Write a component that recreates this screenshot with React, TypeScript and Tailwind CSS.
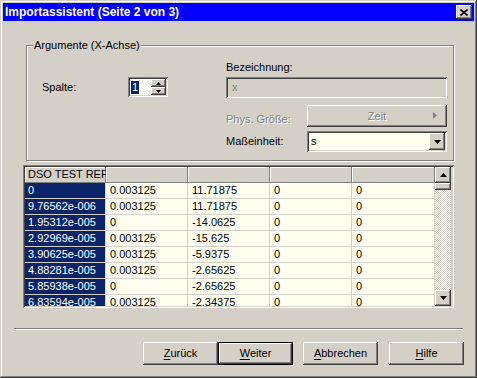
const raised =
  'shadow-[inset_-1px_-1px_#404040,inset_1px_1px_#ffffff,inset_-2px_-2px_#808080,inset_2px_2px_#d4d0c8]'
const sunken =
  'shadow-[inset_1px_1px_#808080,inset_-1px_-1px_#ffffff,inset_2px_2px_#404040,inset_-2px_-2px_#d4d0c8]'

const rows = [
  ['0', '0.003125', '11.71875', '0', '0'],
  ['9.76562e-006', '0.003125', '11.71875', '0', '0'],
  ['1.95312e-005', '0', '-14.0625', '0', '0'],
  ['2.92969e-005', '0.003125', '-15.625', '0', '0'],
  ['3.90625e-005', '0.003125', '-5.9375', '0', '0'],
  ['4.88281e-005', '0.003125', '-2.65625', '0', '0'],
  ['5.85938e-005', '0', '-2.65625', '0', '0'],
  ['6.83594e-005', '0.003125', '-2.34375', '0', '0'],
]

const colWidths = ['w-[81px]', 'w-[82px]', 'w-[82px]', 'w-[82px]', 'w-[83px]']

const Tri = ({ dir, color = '#000', size = 'w-[7px] h-[4px]' }: { dir: 'up' | 'down' | 'right'; color?: string; size?: string }) => {
  const pts = dir === 'up' ? '0,4 7,4 3.5,0' : dir === 'down' ? '0,0 7,0 3.5,4' : '0,0 0,7 4,3.5'
  const vb = dir === 'right' ? '0 0 4 7' : '0 0 7 4'
  return (
    <svg viewBox={vb} className={size}>
      <polygon points={pts} fill={color} />
    </svg>
  )
}

const Button = ({ label, mnemonic, def }: { label: string; mnemonic: string; def?: boolean }) => {
  const rest = label.slice(1)
  return (
    <div className={`w-[75px] h-[23px] ${def ? 'border border-black' : ''}`}>
      <div className={`w-full h-full ${raised} flex items-center justify-center`}>
        <span>
          <span className="underline underline-offset-2">{mnemonic}</span>
          {rest}
        </span>
      </div>
    </div>
  )
}

const DataTable = () => (
  <div className={`ml-[20px] mt-[4px] w-[431px] h-[143px] p-[2px] ${sunken} bg-[#d4d0c8]`}>
    <div className="flex h-full overflow-hidden">
      <div className="flex flex-col">
        <div className="flex h-[16px]">
          {colWidths.map((w, i) => (
            <div
              key={i}
              className={`${w} h-[16px] shrink-0 bg-[#d4d0c8] shadow-[inset_-1px_-1px_#808080,inset_1px_1px_#ffffff] pl-[3px] leading-[15px] whitespace-nowrap overflow-hidden`}
            >
              {i === 0 ? 'DSO TEST REF' : ''}
            </div>
          ))}
        </div>
        {rows.map((r, ri) => (
          <div key={ri} className="flex h-[16px] shrink-0">
            {r.map((c, ci) => (
              <div
                key={ci}
                className={`${colWidths[ci]} h-[16px] shrink-0 border-r border-b border-[#d4d0c8] leading-[15px] whitespace-nowrap overflow-hidden ${
                  ci === 0 ? 'bg-[#0a246a] text-white pl-[3px]' : 'bg-[#fffff0] pl-[4px]'
                }`}
              >
                {c}
              </div>
            ))}
          </div>
        ))}
      </div>
      <div className="w-[17px] h-full flex flex-col shrink-0">
        <div className={`h-[16px] w-[16px] ${raised} bg-[#d4d0c8] flex items-center justify-center`}>
          <Tri dir="up" />
        </div>
        <div className={`h-[7px] w-[16px] ${raised} bg-[#d4d0c8]`} />
        <div className="flex-1 w-[16px] bg-[repeating-conic-gradient(#d4d0c8_0_25%,#ffffff_0_50%)] bg-[length:2px_2px]" />
        <div className={`h-[16px] w-[16px] ${raised} bg-[#d4d0c8] flex items-center justify-center`}>
          <Tri dir="down" />
        </div>
      </div>
    </div>
  </div>
)

export default function App() {
  return (
    <div className="w-[477px] h-[378px] bg-[#d4d0c8] p-[3px] flex flex-col text-[11px] text-black font-['Liberation_Sans',Arial,sans-serif] shadow-[inset_-1px_-1px_#404040,inset_1px_1px_#d4d0c8,inset_-2px_-2px_#808080,inset_2px_2px_#ffffff]">
      <div className="h-[18px] bg-[#0000ff] flex items-center justify-between pl-[2px] pr-[2px] shrink-0">
        <span className="text-white font-bold text-[12px] leading-[18px]">Importassistent (Seite 2 von 3)</span>
        <div className={`w-[16px] h-[14px] bg-[#d4d0c8] ${raised} flex items-center justify-center`}>
          <svg viewBox="0 0 8 7" className="w-[8px] h-[7px]">
            <path d="M0.5 0.5 L7.5 6.5 M7.5 0.5 L0.5 6.5" stroke="#000" strokeWidth="1.6" />
          </svg>
        </div>
      </div>

      <div className="flex flex-col items-start">
        <div className="relative ml-[23px] mt-[24px] w-[428px] h-[116px] border border-[#808080] shadow-[inset_1px_1px_#ffffff,1px_1px_#ffffff]">
          <span className="absolute -top-[8px] left-[6px] bg-[#d4d0c8] px-[1px] leading-[14px]">Argumente (X-Achse)</span>
          <div className="flex items-start pl-[15px] pt-[15px]">
            <div className="w-[184px] h-[20px] mt-[16px] flex items-center">
              <span className="w-[86px]">Spalte:</span>
              <div className={`w-[40px] h-[20px] bg-white ${sunken} p-[2px] flex`}>
                <div className="flex-1 flex items-center pl-[1px]">
                  <span className="bg-[#0a246a] text-white leading-[13px] px-[1px]">1</span>
                </div>
                <div className="w-[15px] flex flex-col">
                  <div className={`h-[8px] ${raised} bg-[#d4d0c8] flex items-center justify-center`}>
                    <Tri dir="up" size="w-[5px] h-[3px]" />
                  </div>
                  <div className={`h-[8px] ${raised} bg-[#d4d0c8] flex items-center justify-center`}>
                    <Tri dir="down" size="w-[5px] h-[3px]" />
                  </div>
                </div>
              </div>
            </div>
            <div className="flex flex-col w-[221px]">
              <span className="leading-[13px] h-[13px]">Bezeichnung:</span>
              <div className={`mt-[3px] h-[21px] ${sunken} bg-[#d4d0c8] pl-[6px] flex items-center text-[#808080]`}>
                x
              </div>
              <div className="mt-[7px] flex items-end">
                <span className="w-[81px] text-[#808080] [text-shadow:1px_1px_#ffffff] leading-[13px] mb-[1px]">
                  Phys. Größe:
                </span>
                <div className={`w-[140px] h-[22px] ${raised} bg-[#d4d0c8] relative flex items-center justify-center`}>
                  <span className="text-[#808080] [text-shadow:1px_1px_#ffffff]">Zeit</span>
                  <span className="absolute right-[10px] top-[7px] flex">
                    <Tri dir="right" color="#808080" size="w-[4px] h-[7px]" />
                  </span>
                </div>
              </div>
              <div className="mt-[4px] flex items-center">
                <span className="w-[81px]">Maßeinheit:</span>
                <div className={`w-[140px] h-[21px] ${sunken} bg-[#fffff0] p-[2px] flex`}>
                  <span className="flex-1 pl-[2px] leading-[17px]">s</span>
                  <div className={`w-[16px] h-[17px] ${raised} bg-[#d4d0c8] flex items-center justify-center`}>
                    <Tri dir="down" />
                  </div>
                </div>
              </div>
            </div>
          </div>
        </div>

        <DataTable />

        <div className="ml-[11px] mt-[20px] w-[449px] h-[2px] border-t border-t-[#808080] border-b border-b-white" />

        <div className="ml-[140px] mt-[12px] flex">
          <Button label="Zurück" mnemonic="Z" />
          <Button label="Weiter" mnemonic="W" def />
          <div className="w-[10px]" />
          <Button label="Abbrechen" mnemonic="A" />
          <div className="w-[11px]" />
          <Button label="Hilfe" mnemonic="H" />
        </div>
      </div>
    </div>
  )
}
